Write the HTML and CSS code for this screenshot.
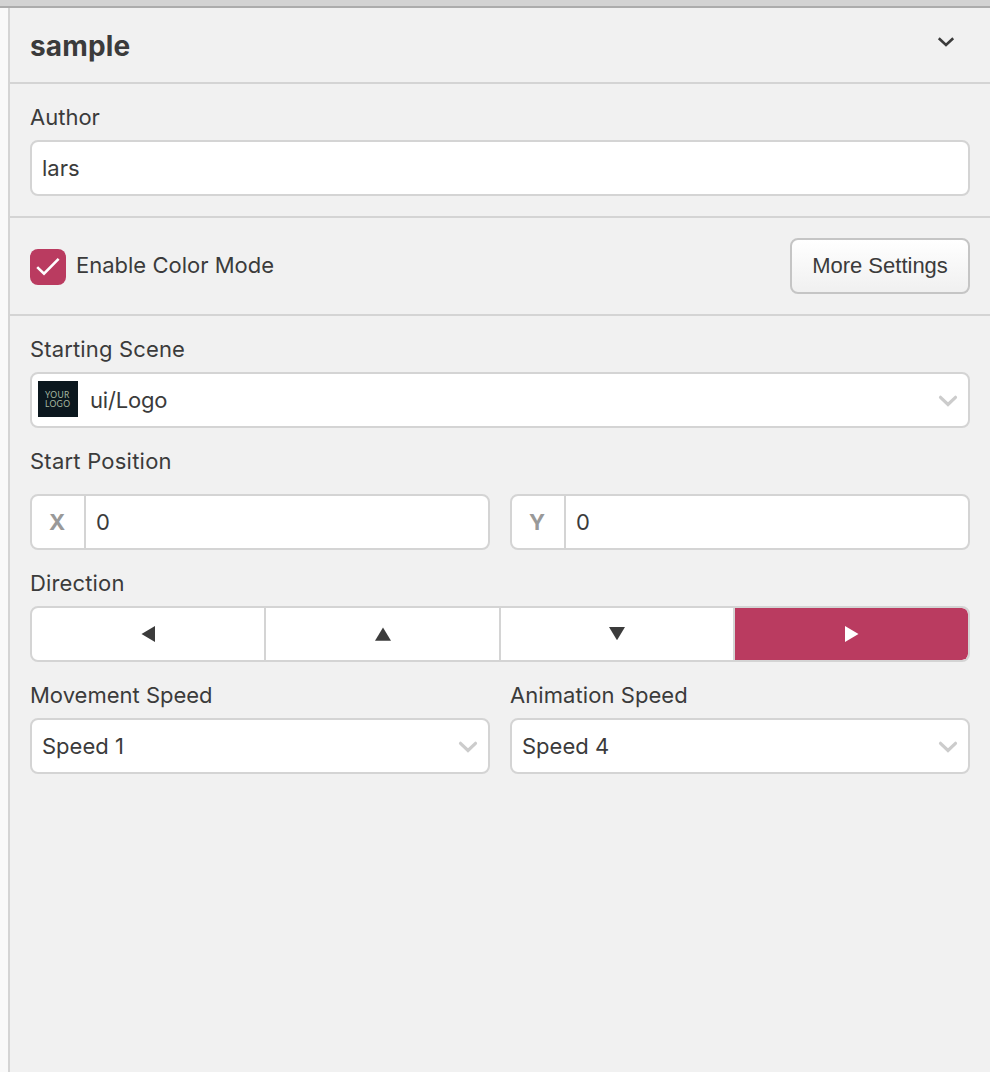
FILE: index.html
```html
<!DOCTYPE html>
<html lang="en">
<head>
<meta charset="utf-8">
<title>sample</title>
<link rel="stylesheet" href="styles.css">
</head>
<body>
<div class="titlebar"></div>
<main class="workspace">
  <div class="gutter"></div>
  <aside class="sidebar">
    <header class="header">
      <h1 class="title">sample</h1>
      <svg class="header-chevron" width="20" height="14" viewBox="0 0 20 14"><path d="M2.8 3.2 10 9.9 17.2 3.2" fill="none" stroke="#3b3b3b" stroke-width="2.6"/></svg>
    </header>
    <section class="section">
      <label class="label author">Author</label>
      <div class="control"><span class="value lars">lars</span></div>
    </section>
    <section class="section toggle-row">
      <span class="checkbox"><svg width="36" height="36" viewBox="0 0 36 36"><path d="M7.2 18.1 14 24.6 28.6 9.9" fill="none" stroke="#fff" stroke-width="2.6"/></svg></span>
      <span class="toggle-label">Enable Color Mode</span>
      <button class="button">More Settings</button>
    </section>
    <section class="section fields">
      <div class="field">
        <label class="label scene">Starting Scene</label>
        <div class="control scene-select">
          <span class="thumb"><span>YOUR</span><span>LOGO</span></span>
          <span class="value logo-name">ui/Logo</span>
          <svg class="chevron" width="24" height="16" viewBox="0 0 24 16"><path d="M4.5 4.3 12 11.5 19.5 4.3" fill="none" stroke="#ccc" stroke-width="3.2" stroke-linecap="round"/></svg>
        </div>
      </div>
      <div class="field">
        <label class="label position">Start Position</label>
        <div class="columns">
          <div class="control coord"><span class="axis">X</span><span class="value">0</span></div>
          <div class="control coord"><span class="axis">Y</span><span class="value">0</span></div>
        </div>
      </div>
      <div class="field">
        <label class="label direction">Direction</label>
        <div class="segments">
          <span class="segment"><svg width="16" height="18" viewBox="0 0 16 18"><path d="M1.5 9 15 1v16z"/></svg></span>
          <span class="segment"><svg width="18" height="16" viewBox="0 0 18 16"><path d="M9 1.6 17 14.8H1z"/></svg></span>
          <span class="segment"><svg width="18" height="16" viewBox="0 0 18 16"><path d="M1 1h16L9 14.2z"/></svg></span>
          <span class="segment active"><svg width="16" height="18" viewBox="0 0 16 18"><path d="M14.5 9 1 1v16z"/></svg></span>
        </div>
      </div>
      <div class="columns">
        <div class="field">
          <label class="label movement">Movement Speed</label>
          <div class="control">
            <span class="value speed">Speed 1</span>
            <svg class="chevron" width="24" height="16" viewBox="0 0 24 16"><path d="M4.5 4.3 12 11.5 19.5 4.3" fill="none" stroke="#ccc" stroke-width="3.2" stroke-linecap="round"/></svg>
          </div>
        </div>
        <div class="field">
          <label class="label animation">Animation Speed</label>
          <div class="control">
            <span class="value speed">Speed 4</span>
            <svg class="chevron" width="24" height="16" viewBox="0 0 24 16"><path d="M4.5 4.3 12 11.5 19.5 4.3" fill="none" stroke="#ccc" stroke-width="3.2" stroke-linecap="round"/></svg>
          </div>
        </div>
      </div>
    </section>
  </aside>
</main>
</body>
</html>
```

FILE: styles.css
```css
* { box-sizing: border-box; }
body {
  margin: 0;
  height: 1072px;
  display: flex;
  flex-direction: column;
  overflow: hidden;
  background: #f1f1f1;
  color: #3b3b3b;
  font: 22px/28px Inter, sans-serif;
}
svg { display: block; flex: none; }
.titlebar { height: 8px; flex: none; background: #d3d3d3; border-bottom: 2px solid #acacac; }
.workspace { flex: 1; display: flex; }
.gutter { width: 8px; background: #f9f9f9; }
.sidebar { flex: 1; border-left: 2px solid #d4d4d4; }
.header {
  height: 76px;
  padding: 0 34px 0 20px;
  display: flex;
  align-items: center;
  justify-content: space-between;
  border-bottom: 2px solid #d4d4d4;
}
.title { margin: 0; font-size: 28px; line-height: 36px; font-weight: 700; letter-spacing: .15px; padding-top: 2px; }
.header-chevron { margin-bottom: 6px; }
.section { padding: 20px; border-bottom: 2px solid #d4d4d4; }
.label { display: block; line-height: 26px; margin-bottom: 10px; white-space: nowrap; }
.scene, .direction { letter-spacing: .15px; }
.position { letter-spacing: .23px; }
.animation { letter-spacing: .07px; }
.logo-name { letter-spacing: -.2px; }
.toggle-label { line-height: 26px; padding-bottom: 2px; }
.control {
  height: 56px;
  display: flex;
  align-items: center;
  padding: 0 8px 0 10px;
  background: #fff;
  border: 2px solid #d4d4d4;
  border-radius: 8px;
}
.chevron { margin-left: auto; margin-top: 2px; }
.toggle-row { display: flex; align-items: center; }
.checkbox { width: 36px; height: 36px; margin: 2px 10px 0 0; border-radius: 8px; background: #ba3b60; }
.button {
  width: 180px;
  height: 56px;
  margin-left: auto;
  padding: 0;
  border: 2px solid #c5c5c5;
  border-radius: 8px;
  background: linear-gradient(#fff, #f0f0f0);
  color: #3b3b3b;
  font: 22px "Liberation Sans", Arial, sans-serif;
}
.fields { display: flex; flex-direction: column; gap: 20px; border-bottom: 0; }
.scene-select { padding-left: 6px; }
.thumb {
  width: 40px;
  height: 36px;
  margin: -2px 12px 0 0;
  padding: 10px 0 0 7px;
  display: flex;
  flex-direction: column;
  background: #0b171e;
  color: #a3b5a0;
  font: 8.5px/8.5px Lato, sans-serif;
  letter-spacing: .35px;
}
.position { margin-bottom: 20px; }
.columns { display: grid; grid-template-columns: 1fr 1fr; gap: 20px; }
.coord { padding: 0; }
.axis {
  width: 54px;
  height: 100%;
  display: flex;
  align-items: center;
  justify-content: center;
  padding-right: 2px;
  margin-right: 10px;
  border-right: 2px solid #d4d4d4;
  color: #999;
  font-size: 22px;
  font-weight: 700;
}
.segments {
  height: 56px;
  display: grid;
  grid-template-columns: 234px 235px 234px 1fr;
  border: 2px solid #d4d4d4;
  border-radius: 8px;
  background: #fff;
  overflow: hidden;
}
.segment { display: flex; align-items: center; justify-content: center; border-right: 2px solid #d4d4d4; }
.segment path { fill: #3b3b3b; }
.segment.active { background: #ba3b60; border-right: 0; border-radius: 0 6px 6px 0; }
.segment.active path { fill: #fff; }
```
